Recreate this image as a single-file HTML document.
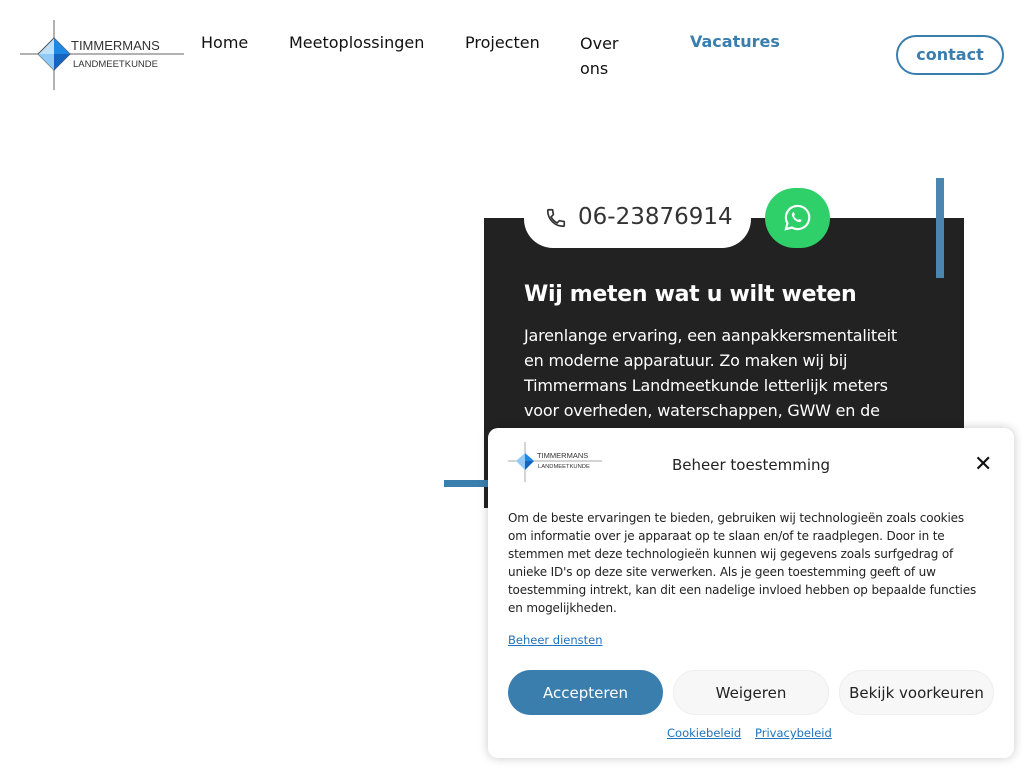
<!DOCTYPE html>
<html><head><meta charset="utf-8"><style>
*{margin:0;padding:0;box-sizing:border-box}
body{width:1024px;height:768px;overflow:hidden;background:#fff;font-family:"DejaVu Sans","Liberation Sans",sans-serif;position:relative;color:#111}
.a{position:absolute;white-space:nowrap}
.nav{font-size:16px;color:#111}
.p{font-size:16px;color:#fff;line-height:25px;letter-spacing:-0.2px}
.m{font-size:12px;color:#222;line-height:18px;letter-spacing:-0.15px}
.btn{position:absolute;height:45px;border-radius:23px;font-size:15px;display:flex;align-items:center;justify-content:center}
</style></head><body>
<svg class="a" style="left:18px;top:18px" width="168" height="74">
<line x1="36" y1="2" x2="36" y2="72" stroke="#999" stroke-width="1.5"/>
<line x1="2" y1="36" x2="166" y2="36" stroke="#999" stroke-width="1.5"/>
<polygon points="36,20 52,36 36,52 20,36" fill="#bfe0f7" stroke="#555" stroke-width="1"/>
<polygon points="36,20 52,36 36,36" fill="#1e88e5"/>
<polygon points="36,36 52,36 36,52" fill="#1565c0"/>
<polygon points="20,36 36,36 36,52" fill="#90caf9"/>
<text x="53" y="32" font-family="Liberation Sans" font-size="13" fill="#333">TIMMERMANS</text>
<text x="55" y="49" font-family="Liberation Sans" font-size="9.5" fill="#333">LANDMEETKUNDE</text>
</svg>
<div class="a nav" style="left:201px;top:33px">Home</div>
<div class="a nav" style="left:289px;top:33px">Meetoplossingen</div>
<div class="a nav" style="left:465px;top:33px">Projecten</div>
<div class="a nav" style="left:580px;top:31px;line-height:25px;white-space:normal">Over<br>ons</div>
<div class="a nav" style="left:690px;top:32px;color:#3a7eae;font-weight:bold">Vacatures</div>
<div class="a" style="left:896px;top:35px;width:108px;height:40px;border:2px solid #3a7eae;border-radius:20px;color:#3a7eae;font-weight:bold;font-size:16px;text-align:center;line-height:35px">contact</div>

<div class="a" style="left:484px;top:218px;width:480px;height:290px;background:#222"></div>
<div class="a" style="left:936px;top:178px;width:8px;height:100px;background:#4a86b0"></div>
<div class="a" style="left:444px;top:480px;width:50px;height:7px;background:#3a7eae"></div>
<div class="a" style="left:524px;top:190px;width:227px;height:58px;background:#fff;border-radius:0 0 29px 29px"></div>
<svg class="a" style="left:545px;top:207px" width="22" height="22" viewBox="0 0 24 24"><path d="M6.6 10.8c1.4 2.8 3.8 5.1 6.6 6.6l2.2-2.2c.3-.3.7-.4 1-.2 1.1.4 2.3.6 3.6.6.6 0 1 .4 1 1V20c0 .6-.4 1-1 1C10.6 21 3 13.4 3 4c0-.6.4-1 1-1h3.5c.6 0 1 .4 1 1 0 1.3.2 2.5.6 3.6.1.3 0 .7-.2 1z" fill="none" stroke="#333" stroke-width="1.8"/></svg>
<div class="a" style="left:578px;top:204px;font-size:23px;color:#333">06-23876914</div>
<div class="a" style="left:765px;top:188px;width:65px;height:60px;border-radius:30px;background:#2fd06a"></div>
<svg class="a" style="left:783px;top:203px" width="29" height="29" viewBox="0 0 30 30"><path d="M15 3a12 12 0 0 0-10.4 18L3 27l6.2-1.6A12 12 0 1 0 15 3z" fill="none" stroke="#fff" stroke-width="2.2"/><path d="M11 9.5c.5 0 .8 1.5 1.2 2.3.2.5-.8 1.3-.8 1.6.8 1.8 2.3 3.2 4 4 .4 0 1.1-1 1.6-.9.8.3 2.2.9 2.2 1.3 0 1.2-1 2-2.3 2-3.6-.3-7.4-4-7.7-7.6 0-1.3.8-2.6 1.8-2.7z" fill="#fff"/></svg>
<div class="a" style="left:524px;top:282px;font-size:22px;font-weight:bold;color:#fff;letter-spacing:-0.3px">Wij meten wat u wilt weten</div>
<div class="a p" style="left:524px;top:323px">Jarenlange ervaring, een aanpakkersmentaliteit<br>en moderne apparatuur. Zo maken wij bij<br>Timmermans Landmeetkunde letterlijk meters<br>voor overheden, waterschappen, GWW en de</div>

<div class="a" style="left:488px;top:428px;width:526px;height:330px;background:#fff;border-radius:10px;box-shadow:0 0 10px rgba(0,0,0,.22)"></div>
<svg class="a" style="left:507px;top:441px" width="96" height="42">
<line x1="18" y1="1" x2="18" y2="41" stroke="#aaa"/><line x1="1" y1="20" x2="95" y2="20" stroke="#aaa"/>
<polygon points="18,12 27,20 18,29 9,20" fill="#90caf9"/><polygon points="18,12 27,20 18,20" fill="#1e88e5"/><polygon points="18,20 27,20 18,29" fill="#1565c0"/>
<text x="30" y="17" font-family="Liberation Sans" font-size="7.5" fill="#333">TIMMERMANS</text>
<text x="31" y="27" font-family="Liberation Sans" font-size="5.8" fill="#333">LANDMEETKUNDE</text></svg>
<div class="a" style="left:672px;top:456px;font-size:15px;color:#222">Beheer toestemming</div>
<div class="a" style="left:974px;top:452px;font-size:22px;font-weight:bold;color:#111">✕</div>
<div class="a m" style="left:508px;top:509px">Om de beste ervaringen te bieden, gebruiken wij technologieën zoals cookies<br>om informatie over je apparaat op te slaan en/of te raadplegen. Door in te<br>stemmen met deze technologieën kunnen wij gegevens zoals surfgedrag of<br>unieke ID's op deze site verwerken. Als je geen toestemming geeft of uw<br>toestemming intrekt, kan dit een nadelige invloed hebben op bepaalde functies<br>en mogelijkheden.</div>
<div class="a" style="left:508px;top:633px;font-size:11.5px;color:#1e73be;text-decoration:underline">Beheer diensten</div>
<div class="btn" style="left:508px;top:670px;width:155px;background:#3a7eae;color:#fff">Accepteren</div>
<div class="btn" style="left:673px;top:670px;width:156px;background:#f7f7f7;border:1px solid #eee;color:#222">Weigeren</div>
<div class="btn" style="left:839px;top:670px;width:155px;background:#f7f7f7;border:1px solid #eee;color:#222">Bekijk voorkeuren</div>
<div class="a" style="left:667px;top:726px;font-size:11.5px;color:#1e73be;text-decoration:underline">Cookiebeleid</div>
<div class="a" style="left:755px;top:726px;font-size:11.5px;color:#1e73be;text-decoration:underline">Privacybeleid</div>
</body></html>
